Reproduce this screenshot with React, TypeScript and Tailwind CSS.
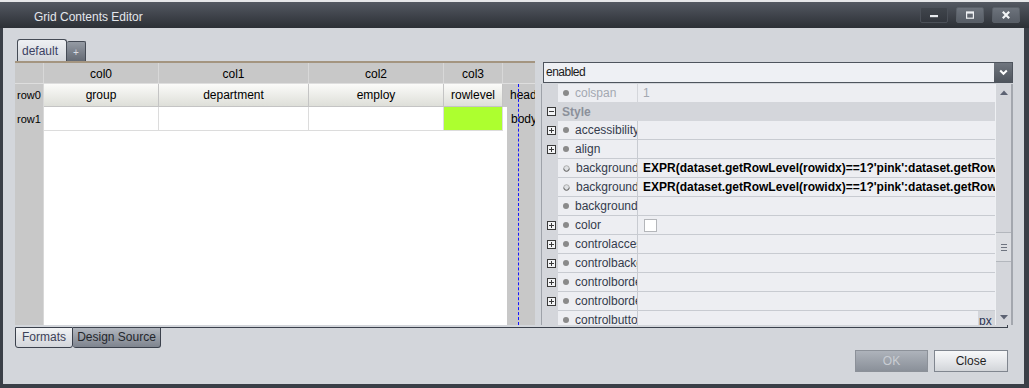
import React from 'react'

type Col = { head: string; body: string; w: string; green?: boolean }

const cols: Col[] = [
  { head: 'col0', body: 'group', w: 'w-[115px]' },
  { head: 'col1', body: 'department', w: 'w-[150px]' },
  { head: 'col2', body: 'employ', w: 'w-[135px]' },
  { head: 'col3', body: 'rowlevel', w: 'w-[59px]', green: true },
]

const EXPR = "EXPR(dataset.getRowLevel(rowidx)==1?'pink':dataset.getRowLevel(rowidx)==2?'yellow':''"

type Prop = { name: string; expand?: boolean; half?: boolean; value?: string; swatch?: boolean; unit?: string }

const props: Prop[] = [
  { name: 'accessibility', expand: true },
  { name: 'align', expand: true },
  { name: 'background', half: true, value: EXPR },
  { name: 'background', half: true, value: EXPR },
  { name: 'background' },
  { name: 'color', expand: true, swatch: true },
  { name: 'controlaccessibility', expand: true },
  { name: 'controlbackground', expand: true },
  { name: 'controlborder', expand: true },
  { name: 'controlborderradius', expand: true },
  { name: 'controlbuttonsize', unit: 'px' },
]

function BoxIcon({ plus }: { plus?: boolean }) {
  return (
    <svg width="9" height="9" viewBox="0 0 9 9" className="shrink-0">
      <rect x="0.5" y="0.5" width="8" height="8" fill="#f3f4f6" stroke="#3a3a3a" />
      <path d={plus ? 'M2 4.5H7M4.5 2V7' : 'M2 4.5H7'} stroke="#3a3a3a" />
    </svg>
  )
}

function Bullet({ half }: { half?: boolean }) {
  if (half) {
    return (
      <svg width="7" height="7" viewBox="0 0 7 7" className="shrink-0">
        <circle cx="3.5" cy="3.5" r="2.8" fill="#dfe1e4" stroke="#a0a0a0" strokeWidth="0.8" />
        <path d="M0.8 3.6A2.7 2.7 0 0 0 6.2 3.6" fill="none" stroke="#6e6e6e" strokeWidth="1" />
      </svg>
    )
  }
  return <span className="w-[6px] h-[6px] rounded-full bg-[#8a8a8a] shrink-0" />
}

function TitleBar() {
  return (
    <div className="h-[26px] flex items-center bg-gradient-to-b from-[#545962] to-[#2c3036] pl-[34px] pr-[9px]">
      <span className="mt-[3px] text-[12px] text-[#e4e7ec]">Grid Contents Editor</span>
      <div className="ml-auto flex gap-[8px]">
        <div className="w-[28px] h-[16px] rounded-[2px] border border-[#4b5058] bg-gradient-to-b from-[#40454c] to-[#33373e] flex items-center justify-center">
          <svg width="10" height="10" viewBox="0 0 10 10">
            <rect x="1" y="5" width="8" height="2.2" fill="#e6e9ed" />
          </svg>
        </div>
        <div className="w-[28px] h-[16px] rounded-[2px] border border-[#5a6068] bg-gradient-to-b from-[#6d737c] to-[#575d66] flex items-center justify-center">
          <svg width="10" height="10" viewBox="0 0 10 10">
            <rect x="1.6" y="2.2" width="6.8" height="6" fill="none" stroke="#eef0f3" strokeWidth="1.2" />
            <rect x="1" y="1.6" width="8" height="2" fill="#eef0f3" />
          </svg>
        </div>
        <div className="w-[28px] h-[16px] rounded-[2px] border border-[#5a6068] bg-gradient-to-b from-[#6d737c] to-[#575d66] flex items-center justify-center">
          <svg width="10" height="10" viewBox="0 0 10 10">
            <path d="M1.8 1.8L8.2 8.2M8.2 1.8L1.8 8.2" stroke="#f2f4f6" strokeWidth="2.2" />
          </svg>
        </div>
      </div>
    </div>
  )
}

function GridPanel() {
  return (
    <div className="w-[520px] shrink-0 flex flex-col">
      {/* sheet tabs */}
      <div className="h-[21px] flex items-end pl-[2px]">
        <div className="h-[22px] w-[50px] rounded-t-[3px] border border-b-0 border-[#454b55] bg-gradient-to-b from-[#eef0f3] to-[#d3d6db] pl-[4px] text-[12px] leading-[22px] text-[#3b3f62]">
          default
        </div>
        <div className="h-[20px] w-[19px] rounded-t-[2px] border border-b-0 border-l-0 border-[#454b55] bg-gradient-to-b from-[#959ba4] to-[#646a74] text-center text-[10px] leading-[22px] text-[#d9dde2]">
          +
        </div>
      </div>
      <div className="h-[2px] bg-[#a49580]" />

      <div className="flex-1 flex bg-white">
        <div className="w-[492px] flex flex-col">
          {/* column header */}
          <div className="h-[21px] flex bg-[#c8c8c8] border-b border-[#dedede]">
            <div className="w-[29px] border-r border-[#d8d8d8]" />
            {cols.map((c) => (
              <div key={c.head} className={`${c.w} border-r border-[#d8d8d8] text-center leading-[22px]`}>
                {c.head}
              </div>
            ))}
            <div className="w-[4px]" />
          </div>
          {/* row0 */}
          <div className="h-[23px] flex">
            <div className="w-[29px] bg-[#c8c8c8] border-r border-[#d8d8d8] pl-[2px] text-[11px] leading-[23px]">row0</div>
            {cols.map((c) => (
              <div
                key={c.body}
                className={`${c.w} bg-gradient-to-b from-[#fbfbf9] to-[#dedfd9] border-r border-b border-[#c4c4c4] text-center leading-[22px]`}
              >
                {c.body}
              </div>
            ))}
            <div className="w-[4px] bg-[#c8c8c8]" />
          </div>
          {/* row1 */}
          <div className="h-[24px] flex">
            <div className="w-[29px] bg-[#c8c8c8] border-r border-[#d8d8d8] pl-[2px] text-[11px] leading-[24px]">row1</div>
            {cols.map((c) => (
              <div
                key={c.head + 'b'}
                className={`${c.w} border-r border-b border-[#dcdcdc] ${c.green ? 'bg-[#adff2f]' : 'bg-white'}`}
              />
            ))}
            <div className="w-[4px]" />
          </div>
          <div className="flex-1 flex">
            <div className="w-[29px] bg-[#c8c8c8] border-r border-[#d8d8d8]" />
          </div>
        </div>

        {/* head / body band */}
        <div className="w-[28px] bg-[#c8c8c8] flex flex-col relative overflow-hidden whitespace-nowrap">
          <div className="h-[21px] border-b border-[#dedede]" />
          <div className="h-[23px] pl-[3px] leading-[23px]">head</div>
          <div className="h-[24px] pl-[4px] leading-[24px]">body</div>
          <div className="absolute left-[11px] top-[21px] bottom-0 border-l border-dashed border-[#1414ff]" />
        </div>
      </div>
    </div>
  )
}

function PropRow({ p }: { p: Prop }) {
  return (
    <div className="h-[19px] flex shrink-0 min-w-0">
      <div className="w-[16px] shrink-0 bg-[#d4d6db] flex items-center pl-[5px]">{p.expand && <BoxIcon plus />}</div>
      <div className="flex-1 min-w-0 flex border-b border-[#c8cbd1] bg-[#edeef2]">
        <div className="w-[80px] shrink-0 border-r border-[#c8cbd1] flex items-center gap-[6px] pl-[5px] overflow-hidden whitespace-nowrap text-[#343b4c]">
          <Bullet half={p.half} />
          <span>{p.name}</span>
        </div>
        <div className="flex-1 min-w-0 flex items-center overflow-hidden whitespace-nowrap">
          {p.value && <span className="pl-[5px] font-bold text-black">{p.value}</span>}
          {p.swatch && <span className="ml-[6px] w-[13px] h-[13px] bg-white border border-[#b4b6ba]" />}
          {p.unit && (
            <span className="ml-auto w-[17px] h-full bg-[#d4d6db] text-[#2b3352] leading-[20px] pl-[1px]">{p.unit}</span>
          )}
        </div>
      </div>
    </div>
  )
}

function PropertyPanel() {
  return (
    <div className="w-[473px] shrink-0 flex flex-col pt-[22px]">
      {/* combo */}
      <div className="h-[21px] ml-[2px] mr-[1px] flex border border-[#4e545d] bg-[#eef0f4]">
        <div className="flex-1 pl-[2px] leading-[19px] tracking-[-0.5px] text-[#1a1a1a]">enabled</div>
        <div className="w-[18px] bg-gradient-to-b from-[#6f757e] to-[#4f555d] flex items-center justify-center">
          <svg width="9" height="7" viewBox="0 0 9 7">
            <path d="M1.2 1.5L4.5 4.8L7.8 1.5" fill="none" stroke="#ffffff" strokeWidth="2" />
          </svg>
        </div>
      </div>

      <div className="mt-[1px] mr-[1px] flex-1 flex border-l border-r-2 border-l-[#9ea2a9] border-r-[#a3a7ae] overflow-hidden">
        <div className="flex-1 min-w-0 flex flex-col overflow-hidden">
          {/* disabled row */}
          <div className="h-[18px] flex shrink-0">
            <div className="w-[16px] shrink-0 bg-[#d4d6db]" />
            <div className="flex-1 flex bg-[#edeef2]">
              <div className="w-[80px] shrink-0 border-r border-[#d4d6db] flex items-center gap-[6px] pl-[5px] text-[#a3a8b1]">
                <Bullet />
                <span>colspan</span>
              </div>
              <div className="flex-1 pl-[5px] leading-[18px] text-[#a3a8b1]">1</div>
            </div>
          </div>
          {/* category */}
          <div className="h-[19px] flex items-center bg-[#d4d6db] pl-[5px] gap-[6px] shrink-0">
            <BoxIcon />
            <span className="font-bold text-[#8b909a]">Style</span>
          </div>
          {props.map((p, i) => (
            <PropRow key={i} p={p} />
          ))}
        </div>

        {/* scrollbar */}
        <div className="w-[16px] shrink-0 bg-[#d4d6db] border-l border-[#eef0f3] flex flex-col">
          <div className="h-[16px] flex items-center justify-center">
            <svg width="8" height="5" viewBox="0 0 8 5">
              <path d="M0 5L4 0.5L8 5Z" fill="#5d6373" />
            </svg>
          </div>
          <div className="flex-1">
            <div className="mt-[132px] h-[30px] border-y border-[#b3b7bd] bg-[#dcdee2] flex flex-col items-center justify-center gap-[2px]">
              <span className="w-[6px] h-[1px] bg-[#6e7480]" />
              <span className="w-[6px] h-[1px] bg-[#6e7480]" />
              <span className="w-[6px] h-[1px] bg-[#6e7480]" />
            </div>
          </div>
          <div className="h-[16px] flex items-center justify-center">
            <svg width="8" height="5" viewBox="0 0 8 5">
              <path d="M0 0L8 0L4 4.5Z" fill="#5d6373" />
            </svg>
          </div>
        </div>
      </div>
    </div>
  )
}

export default function App() {
  return (
    <div className="w-[1029px] h-[388px] flex flex-col bg-[#e2e3e5] font-['Liberation_Sans',Arial,sans-serif] text-[12px] text-black overflow-hidden">
      <div className="h-[2px] bg-[#e6e7e9]" />
      <div className="flex-1 flex flex-col bg-[#3a3f47]">
        <TitleBar />
        <div className="flex-1 ml-[3px] mr-[5px] mb-[4px] bg-[#d3d6db] flex flex-col pl-[12px] pr-[10px] pt-[12px] pb-[12px]">
          <div className="h-[285px] flex">
            <GridPanel />
            <div className="w-[6px] shrink-0" />
            <PropertyPanel />
          </div>

          {/* bottom tabs */}
          <div className="h-[23px] flex pt-[2px]">
            <div className="w-[58px] h-[21px] border border-[#3b414c] rounded-b-[3px] bg-gradient-to-b from-[#f1f2f4] to-[#d3d6db] text-center leading-[19px] text-[#3c4258]">
              Formats
            </div>
            <div className="w-[88px] h-[21px] border border-l-0 border-[#3b414c] rounded-b-[3px] bg-gradient-to-b from-[#b2b7bf] to-[#7e848e] text-center leading-[19px] text-[#24272d]">
              Design Source
            </div>
            <div className="flex-1 mr-[6px] -mt-[2px] h-[3px] border-b border-r border-[#3b414c]" />
          </div>

          {/* dialog buttons */}
          <div className="mt-[2px] h-[22px] flex justify-end gap-[6px] mr-[6px]">
            <div className="w-[73px] border border-[#8c9199] bg-gradient-to-b from-[#aeb3bb] to-[#8a9099] text-center leading-[20px] text-[#c9cdd3]">
              OK
            </div>
            <div className="w-[74px] border border-[#80868f] bg-gradient-to-b from-[#f7f8f9] via-[#e6e8eb] to-[#d2d5d9] text-center leading-[20px] text-[#1e1e1e]">
              Close
            </div>
          </div>
        </div>
      </div>
    </div>
  )
}
